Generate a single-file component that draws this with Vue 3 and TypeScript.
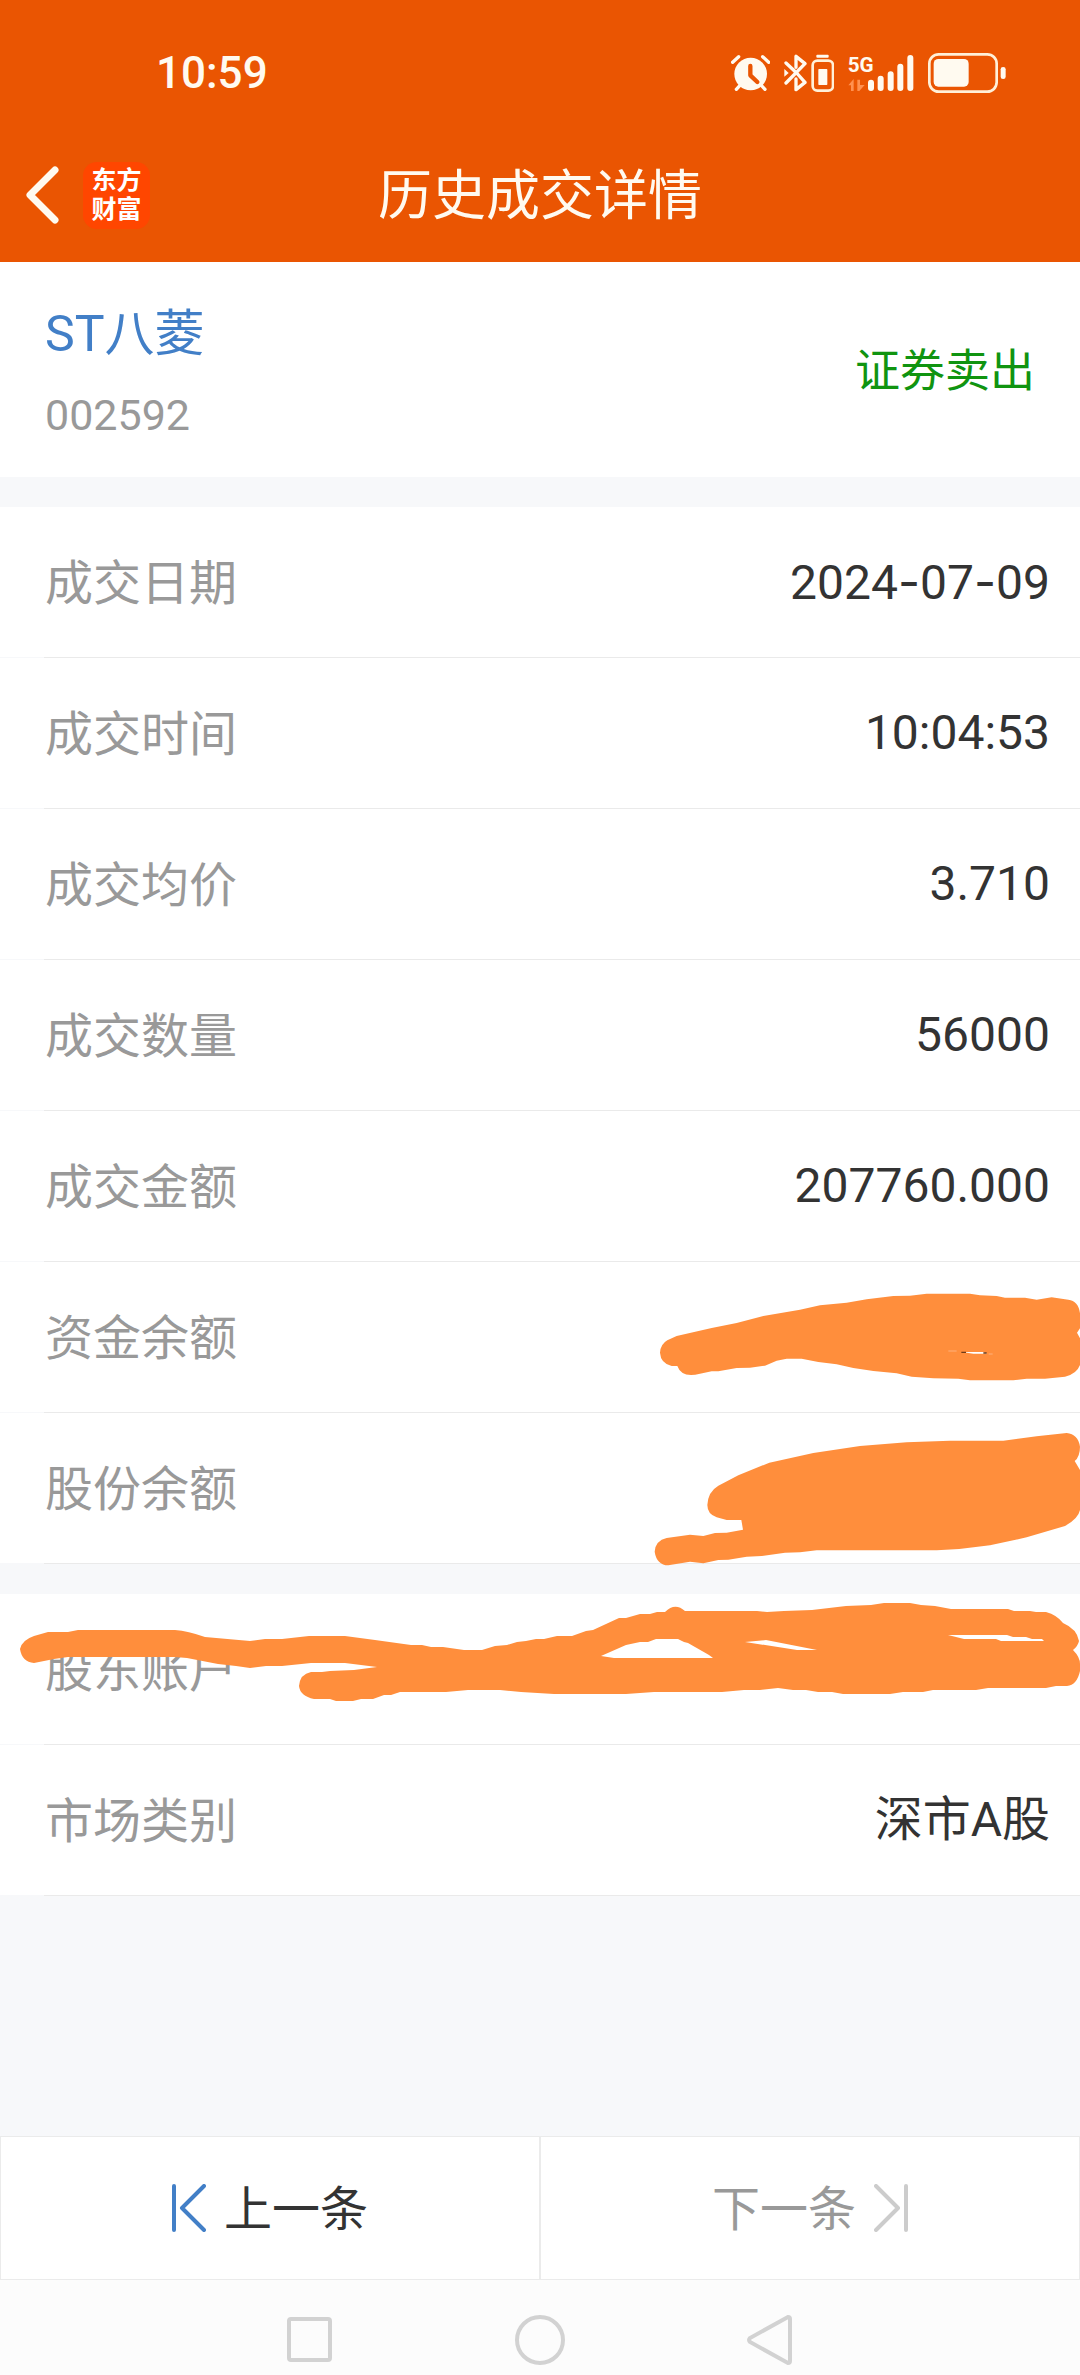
<script setup lang="ts">
interface Stroke {
  viewBox: string
  path: string
  specks?: boolean
}

interface Field {
  label: string
  value: string
  stroke?: Stroke
}

const fundStroke: Stroke = {
  viewBox: '-1920 -24 3240 453',
  path:
    'M60 248 Q62 222 82 211 L110 198 L215 174 L290 159 L370 138 L480 119 L540 106 L620 98 L680 88 L760 78 L810 77 L860 71 L990 71 L1020 76 L1070 78 L1095 83 L1155 83 L1190 89 L1235 82 L1285 89 Q1315 92 1320 130 L1320 175 L1311 188 L1320 205 L1320 285 Q1310 312 1275 320 L1215 326 L1160 326 L1120 331 L990 331 L955 326 L880 325 L815 320 L770 310 L700 303 L640 294 L590 283 L535 276 L485 266 L440 266 L410 272 L375 287 L330 293 L290 294 L235 304 L215 304 L180 311 Q125 325 112 288 L95 288 Q62 280 60 248Z',
  specks: true,
}

const shareStroke: Stroke = {
  viewBox: '-1920 429 3240 453',
  path:
    'M202 705 Q204 665 235 647 L295 616 L388 578 L520 549 L660 528 L800 517 L930 512 L1090 512 L1190 499 L1280 489 Q1314 492 1320 530 Q1320 560 1304 573 L1320 600 L1320 720 Q1315 746 1275 768 L1160 802 L1050 826 Q970 838 890 841 L530 841 L480 847 L435 848 L365 858 L320 860 L265 869 L235 870 L190 880 L150 875 L85 886 Q50 885 44 845 Q46 812 80 804 L150 794 L190 798 L225 789 L260 788 L309 779 L304 750 L260 750 L230 742 Q202 732 202 705Z',
}

const holderStroke: Stroke = {
  viewBox: '0 0 1080 151',
  path:
    'M20 55 Q22 46 34 42 L48 38 L68 38 L78 36 L175 36 Q188 37 205 43 L250 47 L265 45 L282 45 L309 42 L345 42 L375 46 L411 51 L422 51 L431 53 L443 53 L464 56 L482 56 L495 52 L507 51 L517 48 L526 47 L536 45 L544 45 L557 42 L572 42 L586 37 L593 36 L619 24 L626 24 L640 20 L650 20 L657 18 L665 18 Q675 8 685 17 L757 17 L767 18 L784 17 L812 16 L846 12 L871 11 L884 9 L910 9 L921 11 L935 12 L951 15 L1008 15 L1014 17 L1030 17 L1036 18 L1046 18 Q1057 21 1063 29 Q1077 35 1079 47 Q1078 52 1073 56 Q1080 63 1080 70 L1080 77 Q1077 91 1067 92 L1056 92 L1046 94 L988 94 L976 96 L933 96 L923 98 L903 98 L890 100 L843 100 L832 98 L818 98 L806 96 L793 96 L778 94 L760 96 L744 96 L722 98 L654 98 L626 100 L554 100 L521 98 L500 96 L468 96 L446 98 L400 98 L391 101 L384 101 L373 105 L361 105 L353 107 L336 107 L330 105 L314 105 Q300 102 299 92 Q300 80 311 78 L322 78 L330 77 L354 76 L377 73 L345 69 L311 69 L282 72 L266 72 L250 74 L236 72 L218 70 L187 64 L175 63 L68 63 L54 65 L34 69 Q22 68 20 55Z M601 62 L614 64 L713 64 L709 61 L688 49 L684 48 L678 45 L656 45 L648 48 L640 48 L626 51Z M745 48 L797 56 L817 56 L766 46Z M948 41 L964 45 L996 45 L1001 47 L1044 47 L1042 45 L1032 45 L1026 43 L1013 43 L1007 41Z',
}

const tradeFields: Field[] = [
  { label: '成交日期', value: '2024-07-09' },
  { label: '成交时间', value: '10:04:53' },
  { label: '成交均价', value: '3.710' },
  { label: '成交数量', value: '56000' },
  { label: '成交金额', value: '207760.000' },
  { label: '资金余额', value: '', stroke: fundStroke },
  { label: '股份余额', value: '', stroke: shareStroke },
]

const accountFields: Field[] = [
  { label: '股东账户', value: '', stroke: holderStroke },
  { label: '市场类别', value: '深市A股' },
]

const sections: Field[][] = [tradeFields, accountFields]

// Splits a value so that its hyphens can be set in a face with a wider dash.
const parts = (value: string): string[] => value.split(/(-)/)
</script>

<template>
  <div class="page">
    <header class="top">
      <div class="status">
        <time class="clock">10:59</time>
        <div class="indicators">
          <svg width="39" height="42" viewBox="93 66 117 126" aria-hidden="true">
            <circle cx="152" cy="132" r="49" fill="#fffaf0" />
            <path d="M98 97 L116 80 M206 97 L188 80 M109 178 L122 164 M195 178 L182 164" fill="none" stroke="#fffaf0" stroke-width="10" stroke-linecap="round" />
            <path d="M151 108 V136 L172 156" fill="none" stroke="#ea5502" stroke-width="13" stroke-linecap="round" stroke-linejoin="round" />
          </svg>
          <svg width="50" height="42" viewBox="252 66 150 126" aria-hidden="true">
            <path d="M258 99 L290 129 M258 159 L315 101 L288 79 V112 M288 147 V179 L315 157 L290 129" fill="none" stroke="#fffaf0" stroke-width="10" stroke-linecap="round" stroke-linejoin="round" />
            <path d="M253 117 L266 129 L253 140Z" fill="#fffaf0" />
            <rect x="349" y="74" width="37" height="9" rx="3" fill="#fffaf0" />
            <rect x="338" y="92" width="61" height="90" rx="14" fill="none" stroke="#fff0d8" stroke-width="8" />
            <rect x="355" y="117" width="27" height="48" rx="2" fill="#fffaf0" />
          </svg>
          <svg width="66" height="42" viewBox="444 66 198 126" aria-hidden="true">
            <text class="network" x="443" y="127">5G</text>
            <path d="M445 166 L461 147 V183 H453 V166Z M472 149 H480 V165 H494 L478 183 H472Z" fill="#ff9150" />
            <path d="M513 158 V174 M542 146 V174 M572 133 V174 M601 110 V174 M631 84 V174" stroke="#fffaf0" stroke-width="18" stroke-linecap="round" />
          </svg>
          <svg width="78" height="42" viewBox="685 66 234 126" aria-hidden="true">
            <rect x="689" y="73" width="202" height="112" rx="28" fill="none" stroke="#fff0d8" stroke-width="8" />
            <rect x="702" y="87" width="105" height="83" rx="14" fill="#fffaf0" />
            <rect x="903" y="111" width="15" height="36" rx="7" fill="#fffaf0" />
          </svg>
        </div>
      </div>
      <nav class="titlebar">
        <div class="lead">
          <button type="button" class="back" aria-label="返回">
            <svg width="34" height="58" viewBox="0 0 34 58" aria-hidden="true">
              <path d="M30 4 L5 29 L30 54" fill="none" stroke="#fffaf0" stroke-width="7" stroke-linecap="round" stroke-linejoin="round" />
            </svg>
          </button>
          <a href="#" class="logo"><span>东方</span><span>财富</span></a>
        </div>
        <h1>历史成交详情</h1>
        <div class="trail"></div>
      </nav>
    </header>

    <section class="stock">
      <div>
        <h2>ST八菱</h2>
        <p class="code">002592</p>
      </div>
      <strong class="side">证券卖出</strong>
    </section>

    <dl v-for="(fields, i) in sections" :key="i" class="list">
      <div v-for="field in fields" :key="field.label" class="row">
        <dt>{{ field.label }}</dt>
        <dd><span v-for="(part, n) in parts(field.value)" :key="n" :class="{ dash: part === '-' }">{{ part }}</span></dd>
        <svg v-if="field.stroke" class="marker" :viewBox="field.stroke.viewBox" preserveAspectRatio="none" aria-hidden="true">
          <path :d="field.stroke.path" fill="#ff8e3c" fill-rule="evenodd" />
          <g v-if="field.stroke.specks">
            <path d="M925 243 H950 M1046 252 H1058" stroke="#ffb07a" stroke-width="3" />
            <path d="M966 246 H1030 L1042 251 L1000 251Z" fill="#fff" />
            <path d="M964 247 H978 M1030 249 H1040" stroke="#6b3a18" stroke-width="4" />
          </g>
        </svg>
      </div>
    </dl>

    <div class="spacer"></div>

    <footer class="pager">
      <button type="button" class="prev">
        <svg width="34" height="48" viewBox="0 0 34 48" aria-hidden="true">
          <path d="M2 2 V46 M32 2 L10 24 L32 46" fill="none" stroke="#427fc7" stroke-width="4" stroke-linecap="round" stroke-linejoin="round" />
        </svg>
        <span>上一条</span>
      </button>
      <button type="button" class="next" disabled>
        <span>下一条</span>
        <svg width="34" height="48" viewBox="0 0 34 48" aria-hidden="true">
          <path d="M32 2 V46 M2 2 L24 24 L2 46" fill="none" stroke="#ccc" stroke-width="4" stroke-linecap="round" stroke-linejoin="round" />
        </svg>
      </button>
    </footer>

    <nav class="system">
      <button type="button" aria-label="最近任务">
        <svg width="50" height="50" viewBox="0 0 50 50" aria-hidden="true">
          <rect x="4" y="4" width="41" height="41" rx="2" />
        </svg>
      </button>
      <button type="button" aria-label="主屏幕">
        <svg width="50" height="50" viewBox="0 0 50 50" aria-hidden="true">
          <circle cx="25" cy="25" r="23" />
        </svg>
      </button>
      <button type="button" aria-label="返回上级">
        <svg width="50" height="50" viewBox="0 0 50 50" aria-hidden="true">
          <path d="M43 2 Q45 2 45 4 V46 Q45 48 43 48 L5 27 Q3 25 5 23Z" />
        </svg>
      </button>
    </nav>
  </div>
</template>

<style>
body {
  margin: 0;
}
</style>

<style scoped>
.page {
  display: flex;
  flex-direction: column;
  min-height: 100vh;
  background: #f7f8fa;
  font-family: Roboto, "Noto Sans CJK SC", sans-serif;
  color: #333;
}

button {
  margin: 0;
  padding: 0;
  border: 0;
  background: none;
  font: inherit;
  color: inherit;
}

h1,
h2,
p,
dl,
dt,
dd {
  margin: 0;
  font-weight: 400;
}

svg {
  display: block;
}

.top {
  background: #ea5502;
  color: #fffaf0;
}

.status {
  display: flex;
  align-items: center;
  justify-content: space-between;
  height: 110px;
  padding: 18px 74px 0 156px;
}

.clock {
  font-size: 44px;
  font-weight: 500;
}

.indicators {
  display: flex;
  gap: 14px;
}

.network {
  font-size: 62px;
  font-weight: 700;
  fill: #fffaf0;
}

.titlebar {
  display: grid;
  grid-template-columns: 1fr auto 1fr;
  align-items: center;
  height: 134px;
}

.lead {
  display: flex;
  align-items: center;
  gap: 24px;
  padding-left: 25px;
}

.logo {
  display: flex;
  flex-direction: column;
  align-items: center;
  justify-content: center;
  width: 67px;
  height: 67px;
  border-radius: 14px;
  background: #ff4600;
  color: #fff;
  font-size: 25px;
  font-weight: 700;
  line-height: 29px;
  text-decoration: none;
}

h1 {
  padding-top: 4px;
  font-size: 54px;
  line-height: 72px;
}

.stock {
  display: flex;
  align-items: center;
  justify-content: space-between;
  padding: 36px 45px 32px;
  background: #fff;
}

h2 {
  margin-bottom: 15px;
  font-size: 50px;
  line-height: 72px;
  color: #427fc7;
}

.code {
  font-size: 43px;
  line-height: 60px;
  color: #999;
}

.side {
  font-size: 45px;
  font-weight: 400;
  line-height: 72px;
  color: #109410;
}

.list {
  margin-top: 30px;
  background: #fff;
}

.row {
  position: relative;
  display: flex;
  align-items: center;
  justify-content: space-between;
  height: 150px;
  padding: 0 30px 0 45px;
  border-bottom: 1px solid;
  border-image: linear-gradient(to right, #f7f8fa 45px, #eaeaea 45px) 1;
  font-size: 48px;
  line-height: 72px;
}

dt {
  padding-top: 3px;
  color: #999;
}

.dash {
  font-family: Inter, sans-serif;
}

.marker {
  position: absolute;
  top: 0;
  left: 0;
  z-index: 1;
  width: 100%;
  height: 151px;
  overflow: visible;
}

.spacer {
  flex: 1;
  min-height: 30px;
}

.pager {
  display: grid;
  grid-template-columns: 1fr 1fr;
}

.pager button {
  display: flex;
  align-items: center;
  justify-content: center;
  gap: 18px;
  height: 144px;
  border: 1px solid #ebebeb;
  background: #fff;
  font-size: 48px;
  line-height: 72px;
}

.pager span {
  padding-top: 3px;
}

.pager .next {
  color: #999;
}

.system {
  display: grid;
  grid-template-columns: repeat(3, 1fr);
  padding: 35px 18% 10px;
  background: #fcfcfc;
}

.system button {
  display: flex;
  justify-content: center;
}

.system svg {
  fill: none;
  stroke: #d2d2d2;
  stroke-width: 4;
}
</style>
